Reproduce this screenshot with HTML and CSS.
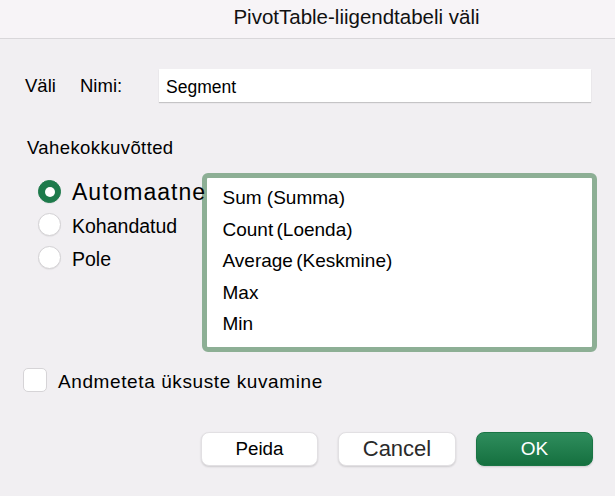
FILE: index.html
```html
<!DOCTYPE html>
<html lang="et">
<head>
<meta charset="utf-8">
<title>PivotTable-liigendtabeli väli</title>
<link rel="stylesheet" href="styles.css">
</head>
<body>
<div class="dialog">
  <div class="titlebar"><span class="title">PivotTable-liigendtabeli väli</span></div>
  <div class="content">
    <div class="name-row">
      <span class="lbl-vali">Väli</span>
      <span class="lbl-nimi">Nimi:</span>
      <div class="input">Segment</div>
    </div>
    <div class="section-label">Vahekokkuvõtted</div>
    <div class="subtotals">
      <div class="radios">
        <div class="radio-row big"><span class="radio checked"></span><span class="rtext">Automaatne</span></div>
        <div class="radio-row"><span class="radio"></span><span class="rtext">Kohandatud</span></div>
        <div class="radio-row"><span class="radio"></span><span class="rtext">Pole</span></div>
      </div>
      <div class="listbox">
        <div class="item">Sum (Summa)</div>
        <div class="item">Count<span class="nsp"> </span>(Loenda)</div>
        <div class="item">Average<span class="nsp"> </span>(Keskmine)</div>
        <div class="item">Max</div>
        <div class="item">Min</div>
      </div>
    </div>
    <div class="check-row"><span class="checkbox"></span><span class="ctext">Andmeteta üksuste kuvamine</span></div>
    <div class="buttons">
      <button class="btn">Peida</button>
      <button class="btn cancel">Cancel</button>
      <button class="btn ok">OK</button>
    </div>
  </div>
</div>
</body>
</html>
```
FILE: styles.css
```css
html, body {
  margin: 0;
  padding: 0;
  background: #f1eff2;
}
body {
  font-family: "Liberation Sans", Arial, sans-serif;
  color: #000;
  width: 615px;
  height: 496px;
  overflow: hidden;
}
.titlebar {
  box-sizing: border-box;
  background: #f7f4f7;
  border-bottom: 1px solid #d9d7da;
  display: flex;
  align-items: center;
  justify-content: center;
  padding: 0 0 4px 98px;
  height: 39px;
}
.title {
  font-size: 20.5px;
  color: #111;
}
.name-row {
  margin-top: 30px;
  height: 33px;
  display: flex;
  align-items: center;
  padding-left: 25px;
  font-size: 18.5px;
}
.lbl-vali {
  width: 55px;
}
.lbl-nimi {
  width: 79px;
}
.input {
  width: 432px;
  height: 33px;
  box-sizing: border-box;
  background: #fff;
  box-shadow: 0 1px 1px rgba(0,0,0,0.18);
  font-size: 17.5px;
  padding: 8px 0 0 7px;
  line-height: 20px;
}
.section-label {
  margin-top: 35px;
  padding-left: 27px;
  font-size: 18.5px;
  line-height: 22px;
  letter-spacing: 0.4px;
}
.subtotals {
  margin-top: 14px;
  display: flex;
}
.radios {
  position: relative;
  z-index: 1;
  width: 164px;
  padding: 2px 0 0 38px;
  white-space: nowrap;
}
.radio-row {
  height: 33px;
  display: flex;
  align-items: center;
  font-size: 19.5px;
}
.radio-row .rtext {
  margin-top: 3px;
}
.radio-row.big {
  font-size: 23px;
  letter-spacing: 1px;
}
.radio-row.big .rtext {
  margin-top: 2px;
}
.radio {
  width: 23px;
  height: 23px;
  box-sizing: border-box;
  border-radius: 50%;
  background: #fff;
  border: 1px solid #d4d2d5;
  box-shadow: 0 0.5px 1px rgba(0,0,0,0.08);
  margin-right: 11px;
  flex: none;
  position: relative;
}
.radio.checked {
  background: #1d7a4b;
  border-color: #1d7a4b;
}
.radio.checked::after {
  content: "";
  position: absolute;
  left: 5.5px;
  top: 5.5px;
  width: 10px;
  height: 10px;
  border-radius: 50%;
  background: #fff;
}
.listbox {
  width: 395px;
  height: 179px;
  box-sizing: border-box;
  background: #fff;
  border: 5.5px solid #8daf95;
  border-radius: 6px;
  padding: 4px 0 0 15.5px;
}
.item {
  height: 31.6px;
  line-height: 31.6px;
  font-size: 19px;
}
.nsp {
  letter-spacing: -2px;
}
.check-row {
  margin-top: 16px;
  padding-left: 23px;
  height: 24px;
  display: flex;
  align-items: center;
}
.checkbox {
  width: 24px;
  height: 24px;
  box-sizing: border-box;
  border-radius: 5px;
  background: #fff;
  border: 1px solid #d6d4d7;
  margin-right: 11px;
  flex: none;
}
.ctext {
  font-size: 19px;
  letter-spacing: 0.6px;
  margin-top: 3px;
}
.buttons {
  margin-top: 40px;
  display: flex;
  justify-content: flex-end;
  gap: 20px;
  padding-right: 22px;
}
.btn {
  width: 117px;
  height: 34px;
  border-radius: 8px;
  border: 1px solid #e2e0e3;
  background: #fff;
  box-shadow: 0 1px 2px rgba(0,0,0,0.15);
  font-family: "Liberation Sans", Arial, sans-serif;
  font-size: 18.8px;
  color: #000;
  padding: 0;
}
.btn.cancel {
  width: 118px;
  font-size: 22px;
  color: #2a2a2a;
}
.btn.ok {
  background: linear-gradient(#2f8d5d, #15703f);
  border-color: #1a7545;
  color: #fff;
  font-size: 19px;
}
```
